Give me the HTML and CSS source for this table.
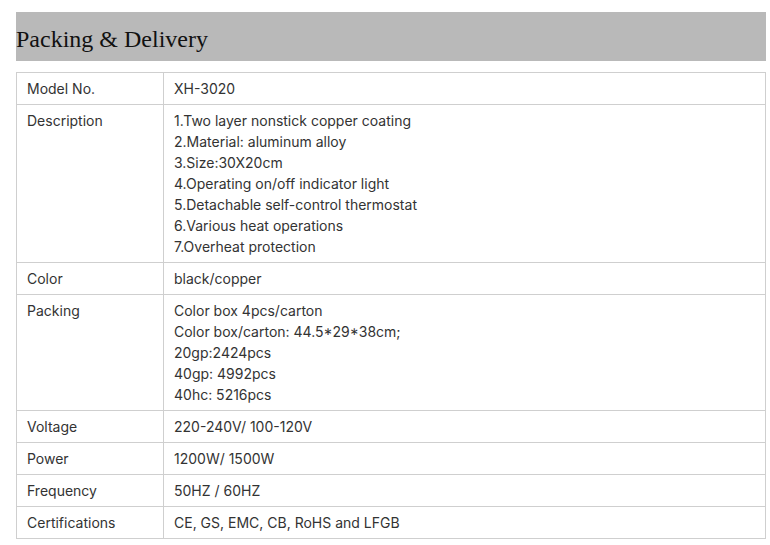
FILE: index.html
```html
<!DOCTYPE html>
<html>
<head>
<meta charset="utf-8">
<link rel="stylesheet" href="styles.css">
</head>
<body>
<div class="wrap">
  <h2 class="title">Packing &amp; Delivery</h2>
  <table class="spec">
    <tr><td class="k">Model No.</td><td>XH-3020</td></tr>
    <tr><td class="k">Description</td><td>1.Two layer nonstick copper coating<br>2.Material: aluminum alloy<br>3.Size:30X20cm<br>4.Operating on/off indicator light<br>5.Detachable self-control thermostat<br>6.Various heat operations<br>7.Overheat protection</td></tr>
    <tr><td class="k">Color</td><td>black/copper</td></tr>
    <tr><td class="k">Packing</td><td>Color box 4pcs/carton<br>Color box/carton: 44.5*29*38cm;<br>20gp:2424pcs<br>40gp: 4992pcs<br>40hc: 5216pcs</td></tr>
    <tr><td class="k">Voltage</td><td>220-240V/ 100-120V</td></tr>
    <tr><td class="k">Power</td><td>1200W/ 1500W</td></tr>
    <tr><td class="k">Frequency</td><td>50HZ / 60HZ</td></tr>
    <tr><td class="k">Certifications</td><td>CE, GS, EMC, CB, RoHS and LFGB</td></tr>
  </table>
</div>
</body>
</html>
```
FILE: styles.css
```css
html, body { margin: 0; padding: 0; background: #fff; }
.wrap { padding: 12px 0 0 16px; width: 750px; }
.title {
  margin: 0;
  background: #b9b9b9;
  height: 49px;
  line-height: 54px;
  font-family: "Liberation Serif", serif;
  font-weight: normal;
  font-size: 24px;
  color: #111;
}
.spec {
  margin-top: 11px;
  width: 750px;
  border-collapse: collapse;
  font-family: Inter, "Liberation Sans", sans-serif;
  font-size: 14px;
  line-height: 21px;
  color: #333;
}
.spec td {
  border: 1px solid #cfcfcf;
  padding: 5px 10px 5px 10px;
  vertical-align: top;
}
.spec td.k { width: 126px; }
```
